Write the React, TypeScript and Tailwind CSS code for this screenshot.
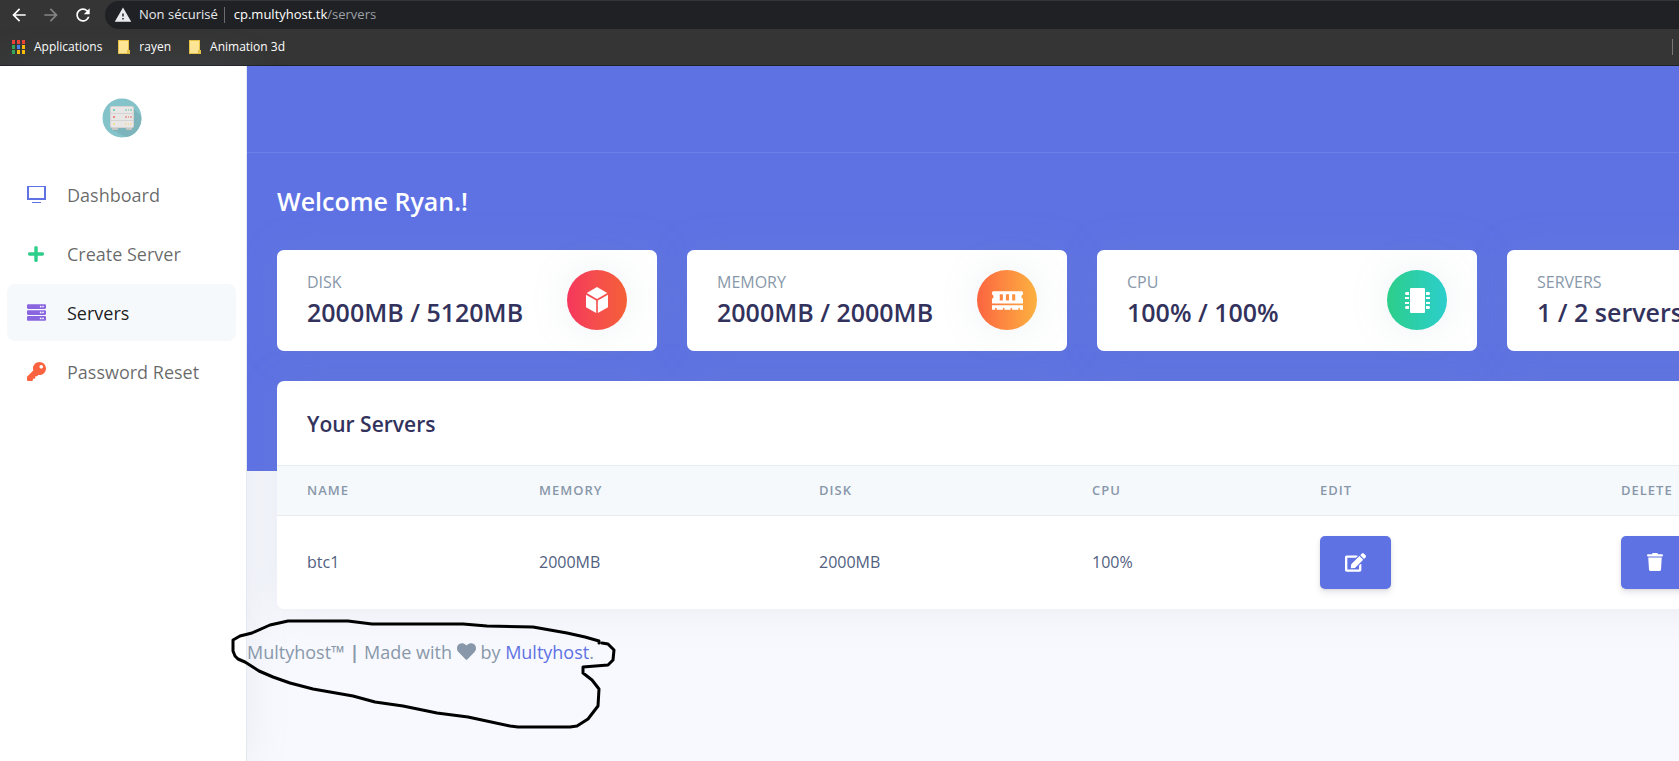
import type { ReactNode } from "react";
import { FaEdit, FaHeart, FaKey, FaMemory, FaPlus, FaServer, FaTrash } from "react-icons/fa";
import { MdArrowBack, MdArrowForward, MdRefresh, MdWarning } from "react-icons/md";

const APP_DOTS = ["#ea4335", "#ea4335", "#ea4335", "#34a853", "#4285f4", "#fbbc05", "#34a853", "#fbbc05", "#fbbc05"];

function AppsIcon() {
  return (
    <svg viewBox="0 0 13 14" className="h-[14px] w-[13px]" aria-hidden="true">
      {APP_DOTS.map((fill, i) => (
        <rect key={i} x={(i % 3) * 5} y={Math.floor(i / 3) * 5} width="3" height="4" fill={fill} />
      ))}
    </svg>
  );
}

function FolderIcon() {
  return (
    <svg viewBox="0 0 12 14" className="h-[14px] w-3" aria-hidden="true">
      <path d="M0 0h11v10h1v4H0z" fill="#e9c445" />
      <path d="M1 1h9v9H9v3H1z" fill="#ffe794" />
    </svg>
  );
}

function BrowserBar() {
  return (
    <header className="h-[66px] overflow-hidden border-b border-[#202124] bg-[#353535] pt-px text-xs text-white">
      <div className="flex h-7 items-center">
        <div className="flex w-[105px] shrink-0 items-center gap-3 pl-[9px]">
          <button type="button" aria-label="Back"><MdArrowBack className="size-5" /></button>
          <button type="button" aria-label="Forward"><MdArrowForward className="size-5 text-[#858585]" /></button>
          <button type="button" aria-label="Reload"><MdRefresh className="size-5" /></button>
        </div>
        <div className="flex h-7 flex-1 items-center rounded-l-full bg-[#202124] pl-[9px] text-[13px]">
          <MdWarning className="size-[18px] text-[#e8eaed]" />
          <span className="ml-[7px] text-[#e8eaed]">Non sécurisé</span>
          <span className="mr-[9px] ml-[6px] h-4 w-px bg-[#6b6c6f]" />
          <span>cp.multyhost.tk<span className="text-[#9aa0a6]">/servers</span></span>
        </div>
      </div>
      <nav className="flex h-9 items-center pl-3">
        <a href="#apps" className="flex items-center gap-[9px]"><AppsIcon />Applications</a>
        <a href="#rayen" className="ml-4 flex items-center gap-[9px]"><FolderIcon />rayen</a>
        <a href="#animation" className="ml-[18px] flex items-center gap-[9px]"><FolderIcon />Animation 3d</a>
        <span className="mr-[6px] ml-auto h-4 w-px bg-[#777]" />
      </nav>
    </header>
  );
}

function Logo() {
  return (
    <svg viewBox="0 0 40 40" className="size-10" role="img" aria-label="Multyhost">
      <circle cx="20" cy="20" r="19.5" fill="#84c3ca" />
      <path d="M31 10l8 8c2 10-6 20-15 21l-15-8z" fill="#7bb4ba" />
      <rect x="10" y="29" width="6" height="3" rx="1" fill="#c8c4c4" />
      <rect x="24" y="29" width="6" height="3" rx="1" fill="#c8c4c4" />
      <rect x="8" y="8" width="24" height="22" rx="2" fill="#d6d3d3" />
      {[9, 16, 23].map((y, i) => (
        <g key={y} fill={["#7fd0b5", "#e58a82", "#f3dc9c"][i]}>
          <rect x="9" y={y} width="22" height="6" rx="1" fill="#e9e6e6" />
          <rect x="11" y={y + 2} width="2" height="2" />
          <rect x="23" y={y + 2} width="2" height="2" opacity=".7" />
          <rect x="26" y={y + 2} width="1" height="2" opacity=".7" />
          <rect x="28" y={y + 2} width="2" height="2" opacity=".7" />
        </g>
      ))}
    </svg>
  );
}

function MonitorIcon() {
  return (
    <svg viewBox="0 0 19 17" className="h-[17px] w-[19px]" fill="currentColor" aria-hidden="true">
      <path fillRule="evenodd" d="M0 0h19v14H0zM2 1h15v11H2z" />
      <rect x="5" y="16" width="9" height="1" />
    </svg>
  );
}

function BoxIcon() {
  return (
    <svg viewBox="0 0 22 26" className="h-[26px] w-[22px]" fill="currentColor" aria-hidden="true">
      <path d="M11 0l10.300 6L11 12 .7 6z" />
      <path d="M0 7.700l10.200 5.800V26L0 20.200z" />
      <path d="M22 7.700l-10.200 5.800V26L22 20.200z" />
    </svg>
  );
}

function ChipIcon() {
  return (
    <svg viewBox="0 0 25 25" className="size-[25px]" fill="currentColor" aria-hidden="true">
      <rect x="5" y="0" width="15" height="25" rx="1" />
      <path d="M0 5l1-1h3v3H1L0 6zM0 9h4v2H0zM0 14h4v2H0zM0 19l1-1h3v3H1l-1-1z" />
      <path d="M25 5l-1-1h-3v3h3l1-1zM25 9h-4v2h4zM25 14h-4v2h4zM25 19l-1-1h-3v3h3l1-1z" />
    </svg>
  );
}

const NAV: { label: string; icon: ReactNode; active?: boolean }[] = [
  { label: "Dashboard", icon: <MonitorIcon /> },
  { label: "Create Server", icon: <FaPlus className="size-[18px] text-[#2dce89]" /> },
  { label: "Servers", icon: <FaServer className="size-[19px] text-[#8965e0]" />, active: true },
  { label: "Password Reset", icon: <FaKey className="size-[19px] text-[#fb6340]" /> },
];

function Sidebar() {
  return (
    <aside className="relative z-10 w-[247px] shrink-0 border-r border-[#e6e8f0] bg-white shadow-[0_0_40px_0_rgba(136,152,170,0.15)]">
      <a href="#home" className="flex justify-center pt-8 pr-[3px]"><Logo /></a>
      <nav className="mt-7 flex flex-col gap-[2px] pr-[10px] pl-[7px]">
        {NAV.map((item) => (
          <a
            key={item.label}
            href={"#" + item.label.toLowerCase().replace(" ", "-")}
            className={
              item.active
                ? "flex h-[57px] items-center rounded-lg bg-[#f6f9fc] pl-5 text-lg text-black/90"
                : "flex h-[57px] items-center rounded-lg pl-5 text-lg text-black/60"
            }
          >
            <span className="w-10 text-[#5e72e4]">{item.icon}</span>
            {item.label}
          </a>
        ))}
      </nav>
    </aside>
  );
}

const STATS = [
  { label: "Disk", value: "2000MB / 5120MB", icon: <BoxIcon />, tint: "from-[#f5365c] to-[#f56036]" },
  { label: "Memory", value: "2000MB / 2000MB", icon: <FaMemory className="h-[25px] w-[31px]" />, tint: "from-[#fb6340] to-[#fbb140]" },
  { label: "CPU", value: "100% / 100%", icon: <ChipIcon />, tint: "from-[#2dce89] to-[#2dcecc]" },
  { label: "Servers", value: "1 / 2 servers", icon: <FaServer className="size-[25px]" />, tint: "from-[#5e72e4] to-[#825ee4]" },
];

const BUTTON =
  "flex h-[53px] items-center justify-center rounded-[5px] bg-[#5e72e4] px-[25px] text-white shadow-[0_4px_6px_rgba(50,50,93,0.11),0_1px_3px_rgba(0,0,0,0.08)]";

function ServersTable() {
  return (
    <section className="mt-[30px] overflow-hidden rounded-[7px] bg-white shadow-[0_0_40px_0_rgba(136,152,170,0.15)]">
      <h3 className="flex h-[84px] items-center px-[30px] pt-1 text-[21px] font-semibold text-[#32325d]">Your Servers</h3>
      <table className="w-full table-fixed text-left">
        <colgroup>
          <col className="w-[232px]" />
          <col className="w-[280px]" />
          <col className="w-[273px]" />
          <col className="w-[228px]" />
          <col className="w-[301px]" />
          <col className="w-[296px]" />
        </colgroup>
        <thead>
          <tr className="h-[50px] border-y border-[#e9ecef] bg-[#f6f9fc] text-[13px] tracking-[1px] text-[#8898aa] uppercase">
            {["Name", "Memory", "Disk", "CPU", "Edit", "Delete"].map((h) => (
              <th key={h} scope="col" className="px-[30px] font-semibold">{h}</th>
            ))}
          </tr>
        </thead>
        <tbody>
          <tr className="h-[93px] text-base text-[#525f7f]">
            <td className="px-[30px]">btc1</td>
            <td className="px-[30px]">2000MB</td>
            <td className="px-[30px]">2000MB</td>
            <td className="px-[30px]">100%</td>
            <td className="px-[30px]">
              <button type="button" aria-label="Edit btc1" className={BUTTON}><FaEdit className="h-[19px] w-[21px]" /></button>
            </td>
            <td className="px-[30px]">
              <button type="button" aria-label="Delete btc1" className={BUTTON}><FaTrash className="size-[18px]" /></button>
            </td>
          </tr>
        </tbody>
      </table>
    </section>
  );
}

function Scribble() {
  return (
    <svg
      viewBox="0 0 390 115"
      className="pointer-events-none absolute -top-6 -left-[17px] z-20 h-[115px] w-[390px]"
      fill="none"
      stroke="#000"
      strokeWidth="3"
      strokeLinecap="round"
      strokeLinejoin="round"
      aria-hidden="true"
    >
      <path d="M369 28V26L355 22L337 18L303 12L257 11L233 9H142L118 6H58L40 10L22 18L10 21L3 25V36L5 41L8 44L15 47L29 56L43 62L60 68L83 74L123 81L145 87L173 91L207 98L238 102L280 111L288 112H340L347 111L358 104L368 91L369 74L362 65L353 58V52L378 50L383 45L384 35L378 29L372 28" />
    </svg>
  );
}

export default function App() {
  return (
    <div className="flex min-h-screen flex-col overflow-hidden bg-[#f8f9fe] font-['Open_Sans',sans-serif]">
      <BrowserBar />
      <div className="flex flex-1">
        <Sidebar />
        <main className="relative z-20 min-w-[1670px] flex-1">
          <div className="absolute inset-x-0 top-0 -z-20 h-[405px] bg-[#5e72e4]" />
          <div className="h-[87px] border-b border-white/10" />
          <div className="px-[30px] pt-[29px]">
            <h1 className="text-[25px] leading-[38px] font-semibold text-white">Welcome Ryan.!</h1>
            <div className="mt-[30px] grid grid-cols-4 gap-[30px]">
              {STATS.map((s) => (
                <section key={s.label} className="flex h-[101px] items-start justify-between rounded-[7px] bg-white px-[30px] pt-5 shadow-[0_0_40px_0_rgba(136,152,170,0.15)]">
                  <div>
                    <h2 className="text-base leading-6 text-[#8898aa] uppercase">{s.label}</h2>
                    <p className="text-[25px] leading-9 font-semibold text-[#32325d]">{s.value}</p>
                  </div>
                  <span className={"flex size-[60px] items-center justify-center rounded-full bg-linear-to-r text-white shadow-[0_0_40px_0_rgba(136,152,170,0.15)] " + s.tint}>
                    {s.icon}
                  </span>
                </section>
              ))}
            </div>
            <ServersTable />
          </div>
          <footer className="relative mt-[30px] text-lg leading-[27px] text-[#8898aa]">
            Multyhost™ <b>|</b> Made with <FaHeart className="inline size-[19px] align-[-2px]" /> by{" "}
            <a href="#multyhost" className="text-[#5e72e4]">Multyhost</a>.
            <Scribble />
          </footer>
        </main>
      </div>
    </div>
  );
}
